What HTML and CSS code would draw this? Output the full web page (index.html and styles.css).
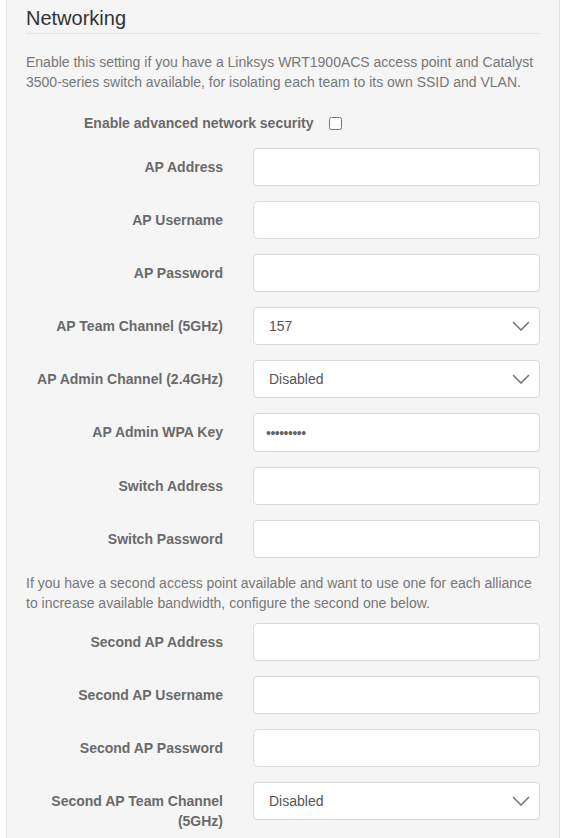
FILE: index.html
```html
<!DOCTYPE html>
<html>
<head>
<meta charset="utf-8">
<link rel="stylesheet" href="styles.css">
</head>
<body>
<div class="well">
  <div class="legend">Networking</div>
  <p class="help">Enable this setting if you have a Linksys WRT1900ACS access point and Catalyst 3500-series switch available, for isolating each team to its own SSID and VLAN.</p>
  <div class="check-row">
    <span class="check-label">Enable advanced network security</span>
    <input type="checkbox" class="check">
  </div>
  <div class="form-group"><label class="control-label">AP Address</label><input class="form-control" type="text"></div>
  <div class="form-group"><label class="control-label">AP Username</label><input class="form-control" type="text"></div>
  <div class="form-group"><label class="control-label">AP Password</label><input class="form-control" type="text"></div>
  <div class="form-group"><label class="control-label">AP Team Channel (5GHz)</label>
    <div class="form-control select"><span>157</span><svg class="chev" width="18" height="10" viewBox="0 0 18 10"><polyline points="1,1 9,9 17,1" fill="none" stroke="#777" stroke-width="1.6"/></svg></div></div>
  <div class="form-group"><label class="control-label">AP Admin Channel (2.4GHz)</label>
    <div class="form-control select"><span>Disabled</span><svg class="chev" width="18" height="10" viewBox="0 0 18 10"><polyline points="1,1 9,9 17,1" fill="none" stroke="#777" stroke-width="1.6"/></svg></div></div>
  <div class="form-group"><label class="control-label">AP Admin WPA Key</label><input class="form-control pw" type="password" value="123456789"></div>
  <div class="form-group"><label class="control-label">Switch Address</label><input class="form-control" type="text"></div>
  <div class="form-group"><label class="control-label">Switch Password</label><input class="form-control" type="text"></div>
  <p class="help">If you have a second access point available and want to use one for each alliance to increase available bandwidth, configure the second one below.</p>
  <div class="form-group"><label class="control-label">Second AP Address</label><input class="form-control" type="text"></div>
  <div class="form-group"><label class="control-label">Second AP Username</label><input class="form-control" type="text"></div>
  <div class="form-group"><label class="control-label">Second AP Password</label><input class="form-control" type="text"></div>
  <div class="form-group"><label class="control-label">Second AP Team Channel (5GHz)</label>
    <div class="form-control select"><span>Disabled</span><svg class="chev" width="18" height="10" viewBox="0 0 18 10"><polyline points="1,1 9,9 17,1" fill="none" stroke="#777" stroke-width="1.6"/></svg></div></div>
</div>
</body>
</html>
```

FILE: styles.css
```css
html, body {
  margin: 0;
  padding: 0;
  background: #fff;
}
body {
  font-family: "Liberation Sans", Arial, sans-serif;
  font-size: 14px;
  line-height: 20px;
  color: #333;
}
.well {
  margin-left: 6px;
  width: 514px;
  background: #f5f5f5;
  border: 1px solid #e3e3e3;
  border-top: 0;
  padding: 3px 19px 40px 19px;
}
.legend {
  font-size: 20px;
  line-height: 30px;
  color: #333;
  border-bottom: 1px solid #e5e5e5;
  margin-bottom: 18px;
}
.help {
  margin: 0 0 10px 0;
  color: #777;
}
.check-row {
  display: flex;
  align-items: center;
  padding: 11px 0 0 58px;
  height: 20px;
  margin-bottom: 15px;
}
.check-label {
  font-weight: bold;
  color: #6a6a6a;
}
.check {
  margin: 0 0 0 15px;
  width: 13px;
  height: 13px;
}
.form-group {
  display: grid;
  grid-template-columns: 197px 1fr;
  column-gap: 30px;
  margin-bottom: 15px;
}
.control-label {
  font-weight: bold;
  color: #6a6a6a;
  text-align: right;
  padding-top: 9px;
}
.form-control {
  box-sizing: border-box;
  height: 38.1px;
  margin: 0;
  background: #fff;
  border: 1px solid #dadada;
  border-radius: 4px;
  padding: 0 12px;
  font-family: "Liberation Sans", Arial, sans-serif;
  font-size: 14px;
  color: #555;
  outline: none;
}
.pw {
  letter-spacing: -0.5px;
  color: #666;
}
.select {
  display: flex;
  align-items: center;
  justify-content: space-between;
  padding: 0 9px 0 15px;
}
.chev {
  display: block;
}
```
